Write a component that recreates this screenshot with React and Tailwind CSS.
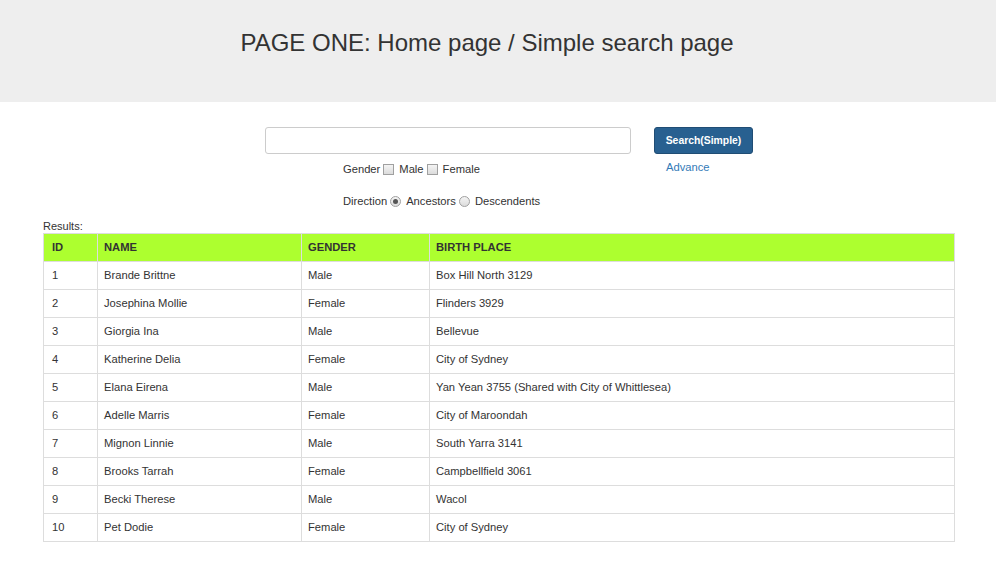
import React from "react";

const rows = [
  { id: 1, name: "Brande Brittne", gender: "Male", place: "Box Hill North 3129" },
  { id: 2, name: "Josephina Mollie", gender: "Female", place: "Flinders 3929" },
  { id: 3, name: "Giorgia Ina", gender: "Male", place: "Bellevue" },
  { id: 4, name: "Katherine Delia", gender: "Female", place: "City of Sydney" },
  { id: 5, name: "Elana Eirena", gender: "Male", place: "Yan Yean 3755 (Shared with City of Whittlesea)" },
  { id: 6, name: "Adelle Marris", gender: "Female", place: "City of Maroondah" },
  { id: 7, name: "Mignon Linnie", gender: "Male", place: "South Yarra 3141" },
  { id: 8, name: "Brooks Tarrah", gender: "Female", place: "Campbellfield 3061" },
  { id: 9, name: "Becki Therese", gender: "Male", place: "Wacol" },
  { id: 10, name: "Pet Dodie", gender: "Female", place: "City of Sydney" },
];

const Box = () => (
  <span className="inline-block w-[11px] h-[11px] border border-[#a0a0a0] bg-gradient-to-b from-[#f4f4f4] to-[#dcdcdc] mx-[3px]" />
);

const Radio = ({ checked }) => (
  <span className="inline-flex items-center justify-center w-[11px] h-[11px] rounded-full border border-[#a0a0a0] bg-gradient-to-b from-[#f4f4f4] to-[#dcdcdc] mx-[3px]">
    {checked && <span className="w-[5px] h-[5px] rounded-full bg-[#555]" />}
  </span>
);

const App = () => {
  return (
    <div className="min-h-[563px] bg-white text-[#333] font-['Liberation_Sans',Arial,sans-serif]">
      <div className="h-[102px] bg-[#eeeeee] flex justify-center pt-[28px]">
        <h1 className="text-[24px] leading-[30px] text-[#333] -ml-[22px]">
          PAGE ONE: Home page / Simple search page
        </h1>
      </div>

      <div className="flex pl-[265px] pt-[25px]">
        <div className="w-[366px]">
          <input
            type="text"
            className="w-full h-[27px] border border-[#ccc] rounded-[3px] bg-white px-2 text-[12px] outline-none"
          />
          <div className="ml-[78px] mt-[7px] flex items-center text-[11.2px] leading-[16px]">
            <span>Gender</span>
            <Box />
            <span className="ml-[2px]">Male</span>
            <Box />
            <span className="ml-[2px]">Female</span>
          </div>
          <div className="ml-[78px] mt-[16px] flex items-center text-[11.2px] leading-[16px]">
            <span>Direction</span>
            <Radio checked />
            <span className="ml-[2px]">Ancestors</span>
            <Radio />
            <span className="ml-[2px]">Descendents</span>
          </div>
        </div>
        <div className="ml-[23px] flex flex-col items-start">
          <button className="w-[99px] h-[27px] bg-[#286090] border border-[#204d74] rounded-[3px] text-white text-[10.4px] font-bold">
            Search(Simple)
          </button>
          <a className="ml-[12px] mt-[5px] text-[11.2px] leading-[16px] text-[#337ab7]">
            Advance
          </a>
        </div>
      </div>

      <div className="px-[43px] mt-[11px]">
        <div className="w-[912px] text-[11px] leading-[12px] mb-[1px]">Results:</div>
        <table className="w-[912px] border-collapse text-[11.2px]">
          <thead>
            <tr className="bg-[#adff2f] h-[28px]">
              <th className="w-[54px] border border-[#ddd] text-left font-bold px-[8px]">ID</th>
              <th className="w-[204px] border border-[#ddd] text-left font-bold px-[6px]">NAME</th>
              <th className="w-[128px] border border-[#ddd] text-left font-bold px-[6px]">GENDER</th>
              <th className="border border-[#ddd] text-left font-bold px-[6px]">BIRTH PLACE</th>
            </tr>
          </thead>
          <tbody>
            {rows.map((r) => (
              <tr key={r.id} className="h-[28px]">
                <td className="border border-[#ddd] px-[8px]">{r.id}</td>
                <td className="border border-[#ddd] px-[6px]">{r.name}</td>
                <td className="border border-[#ddd] px-[6px]">{r.gender}</td>
                <td className="border border-[#ddd] px-[6px]">{r.place}</td>
              </tr>
            ))}
          </tbody>
        </table>
      </div>
    </div>
  );
};

export default App;
